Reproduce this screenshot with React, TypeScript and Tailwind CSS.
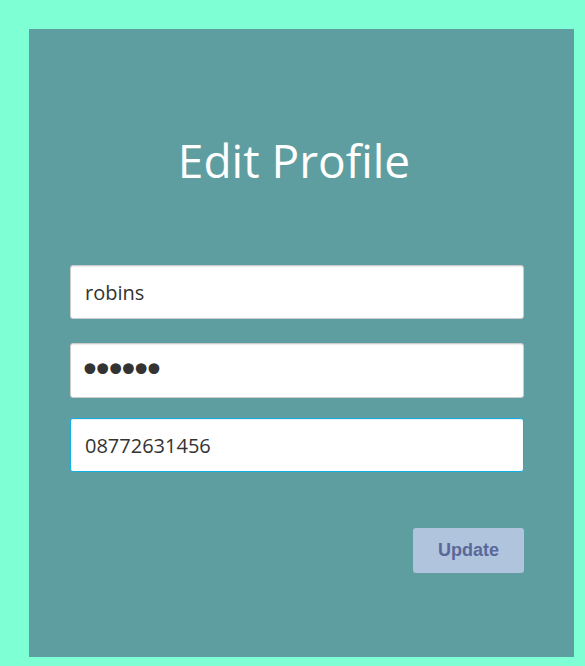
import { useState } from 'react'

export default function App() {
  const [name, setName] = useState('robins')
  const [pass, setPass] = useState('robins')
  const [phone, setPhone] = useState('08772631456')

  const inputCls =
    'block w-full h-[54px] px-[14px] text-[20px] text-[#333] bg-white rounded-[3px] border border-[#cccccc] shadow-[inset_0_1px_1px_rgba(0,0,0,0.075)] outline-none'

  return (
    <div className="min-h-[666px] bg-[#7fffd4] pt-[29px] pl-[29px]">
      <div className="w-[545px] h-[628px] bg-[#5f9ea0] pl-[41px] pr-[50px] pt-[104px]">
        <h1 className="text-center text-white text-[46px] leading-[55px] font-['Open_Sans',sans-serif] pr-[6px]">Edit Profile</h1>
        <form className="mt-[77px]" onSubmit={e => e.preventDefault()}>
          <input value={name} onChange={e => setName(e.target.value)} className={inputCls + " font-['Open_Sans',sans-serif]"} />
          <input type="password" value={pass} onChange={e => setPass(e.target.value)} className={inputCls + " mt-[24px] h-[55px] pl-[8px] pr-[10px] text-[37px] tracking-[-9px] font-['DejaVu_Sans',sans-serif]"} />
          <input value={phone} onChange={e => setPhone(e.target.value)} className={inputCls + " mt-[20px] text-[20.5px] font-['Open_Sans',sans-serif] !border-[#14aee6] shadow-[0_0_4px_rgba(20,174,230,0.5)]"} />
          <div className="flex justify-end mt-[56px]">
            <button type="submit" className="w-[111px] h-[45px] rounded-[3px] bg-[#b0c4de] text-[#5a6899] text-[18px] font-bold font-['Liberation_Sans',Arial,sans-serif]">
              Update
            </button>
          </div>
        </form>
      </div>
    </div>
  )
}
